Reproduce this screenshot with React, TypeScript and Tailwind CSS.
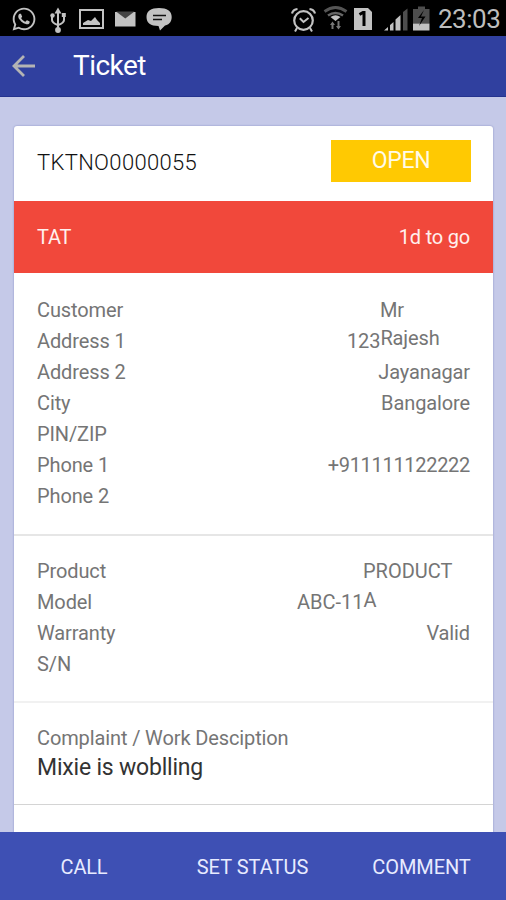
import type { ReactNode } from 'react';
import { FaWhatsapp } from 'react-icons/fa';

const GREY = '#c2c2c2';

/* Status icons share one coordinate system: the x origin is the icon's left edge on the bar. */
function StatusIcon({ x, w, className = '', children }: { x: number; w: number; className?: string; children: ReactNode }) {
  return (
    <svg width={w} height={36} viewBox={`${x} 0 ${w} 36`} className={`block shrink-0 ${className}`} fill="none">
      {children}
    </svg>
  );
}

function StatusBar() {
  return (
    <div className="flex h-9 shrink-0 items-center bg-black pl-[11px] pr-[5px]">
      <FaWhatsapp size={26} color={GREY} className="mt-0.5 shrink-0" />
      <StatusIcon x={48} w={20} className="ml-[11px]">
        <g stroke={GREY} strokeWidth="2">
          <path d="M58 11v19M52 16v4q0 3 6 5M64 16v4q0 3-6 5" />
        </g>
        <path d="M58 7.500l3.500 6h-7z" fill={GREY} />
        <circle cx="58" cy="30" r="2.900" fill={GREY} />
        <circle cx="52.500" cy="15.500" r="2.200" fill={GREY} />
        <path d="M61.800 13h4v4h-4z" fill={GREY} />
      </StatusIcon>
      <StatusIcon x={78} w={27} className="ml-2.5">
        <rect x="80" y="10" width="23" height="18" stroke={GREY} strokeWidth="2" />
        <path d="M83 25v-2l5-3 3 1 4-4 2 3 3 3v2z" fill={GREY} />
      </StatusIcon>
      <StatusIcon x={114} w={24} className="ml-[9px]">
        <path d="M115 12h20.500v14.500H115z" fill={GREY} />
        <path d="M116 11.500h18.500l-9.200 7z" fill="#444" />
      </StatusIcon>
      <StatusIcon x={146} w={27} className="ml-2">
        <path d="M159 8c8 0 12.700 3 12.700 9s-4 8-6.700 8.500L160 30.500 158.500 26c-8 0-12-3-12-9s4.500-9 12.500-9z" fill={GREY} />
        <path d="M153 15.500h13M153 19.500h9" stroke="#111" strokeWidth="1.500" />
      </StatusIcon>
      <StatusIcon x={290} w={27} className="ml-auto">
        <circle cx="303.500" cy="20.500" r="9.300" stroke={GREY} strokeWidth="2.200" />
        <path d="M299.800 18.300l3.700 3.700 5-4M297 28l-2 3.500M310 28l2 3.500" stroke={GREY} strokeWidth="2" />
        <path d="M292 13.500q1-4 5.500-4.500M315 13.500q-1-4-5.500-4.500" stroke={GREY} strokeWidth="2.200" />
      </StatusIcon>
      <StatusIcon x={323} w={26} className="ml-1.5">
        <path d="M324.500 11.500q11-8 22 0" stroke="#555" strokeWidth="2.800" />
        <path d="M328 15.500q7.500-5 15 0" stroke="#666" strokeWidth="2.600" />
        <path d="M330.500 17q5-3.500 10 0L335.500 21z" fill={GREY} />
        <path d="M332.500 23v6M338.500 21v7" stroke="#777" strokeWidth="2" />
        <path d="M330 25l2.500-3.500 2.500 3.500zM336 26l2.500 3.500 2.500-3.500z" fill="#777" />
      </StatusIcon>
      <StatusIcon x={353} w={20} className="ml-1">
        <path d="M354 8h14l4 4v18h-18z" fill={GREY} />
        <path d="M359.500 14.500l3.500-2h1V26" stroke="#000" strokeWidth="3" />
      </StatusIcon>
      <StatusIcon x={383} w={26} className="ml-2.5">
        <path d="M384 30.500l4-3.500v3.500zM390 25l3.500-3v8.500H390zM395.500 19.500l5-4.500v15.500h-5z" fill={GREY} />
        <path d="M403 12l4.500-3.500v22H403z" fill="#4d4d4d" />
      </StatusIcon>
      <StatusIcon x={412} w={19} className="ml-[3px]">
        <path d="M413 9h5V6.500h7V9h4.500v14.500H413z" fill="#4d4d4d" />
        <path d="M413 23.500h16.500v7H413z" fill={GREY} />
        <path d="M424 10l-6 8h4l-3 8 6.500-9.500H421z" fill="#000" />
      </StatusIcon>
      <div className="ml-[7px] w-[63px] whitespace-nowrap text-[26px] leading-9 tracking-[-0.5px] text-[#bdbdbd]">
        <span className="relative top-px">23:03</span>
      </div>
    </div>
  );
}

function Row({ label, children }: { label: string; children?: ReactNode }) {
  return (
    <div className="flex h-[31px] items-center justify-between whitespace-nowrap">
      <span>{label}</span>
      {children}
    </div>
  );
}

export default function App() {
  return (
    <div className="flex h-[900px] w-[506px] flex-col overflow-hidden bg-[#c5c9e8] font-[Roboto,sans-serif]">
      <StatusBar />
      <header className="flex h-[61px] shrink-0 items-center border-b border-[#25338f] bg-[#30409f] pl-3">
        <svg width="24" height="24" viewBox="0 0 24 24" fill="none" stroke="#b4b4b4" strokeWidth="2.800">
          <path d="M23 12H2M12 2L2 12l10 10" />
        </svg>
        <h1 className="ml-[37px] text-[28px] tracking-[-0.55px] text-white">Ticket</h1>
      </header>

      <main className="min-h-0 flex-1 overflow-hidden pl-[14px] pr-[13px] pt-[29px]">
        <div className="h-[720px] w-[479px] rounded-[3px] bg-white text-[20px] tracking-[-0.12px] text-[#757575] shadow-[0_0_2px_#7f86bd]">
          <div className="flex h-[75px] items-center justify-between pl-[23px] pr-[22px]">
            <span className="mb-0.5 text-[22px] font-light tracking-[0.33px] text-[#111]">TKTNO0000055</span>
            <div className="mb-[5px] flex h-[42px] w-[140px] items-center justify-center bg-[#ffc902] text-[23px] tracking-[-0.3px] text-[#fffbe8]">
              <span className="pt-px">OPEN</span>
            </div>
          </div>
          <div className="flex h-[72px] items-center justify-between bg-[#f1483b] px-[23px] text-[20px] tracking-[-0.2px] text-[#fff0ee]">
            <span>TAT</span>
            <span>1d to go</span>
          </div>
          <section className="h-[263px] border-b-2 border-[#e6e6e6] px-[23px] pt-[21.500px]">
            <Row label="Customer"><span className="w-[90px]">Mr</span></Row>
            <Row label="Address 1">
              <span className="flex w-[123px]">123<span className="relative -top-[3px]">Rajesh</span></span>
            </Row>
            <Row label="Address 2"><span>Jayanagar</span></Row>
            <Row label="City"><span>Bangalore</span></Row>
            <Row label="PIN/ZIP" />
            <Row label="Phone 1"><span className="tracking-[-0.3px]">+911111122222</span></Row>
            <Row label="Phone 2" />
          </section>
          <section className="h-[167px] border-b-2 border-[#f1f1f1] px-[23px] pt-[19.500px]">
            <Row label="Product"><span className="w-[107px] tracking-normal">PRODUCT</span></Row>
            <Row label="Model">
              <span className="flex w-[173px] tracking-normal">ABC-11<span className="relative -top-[2px]">A</span></span>
            </Row>
            <Row label="Warranty"><span>Valid</span></Row>
            <Row label="S/N" />
          </section>
          <section className="h-[102px] border-b border-[#d4d4d4] px-[23px] pt-[20px]">
            <div className="h-[31px] leading-[31px]">Complaint / Work Desciption</div>
            <div className="text-[23px] leading-[28px] tracking-[-0.2px] text-[#333]">Mixie is woblling</div>
          </section>
        </div>
      </main>

      <footer className="flex h-[68px] shrink-0 items-center bg-[#3e50b4] pt-[2px] text-[20px] text-[#e8ebff]">
        <button className="w-[168px] text-center tracking-[-0.2px]">CALL</button>
        <button className="w-[169px] text-center">SET STATUS</button>
        <button className="w-[169px] text-center tracking-[-0.1px]">COMMENT</button>
      </footer>
    </div>
  );
}
